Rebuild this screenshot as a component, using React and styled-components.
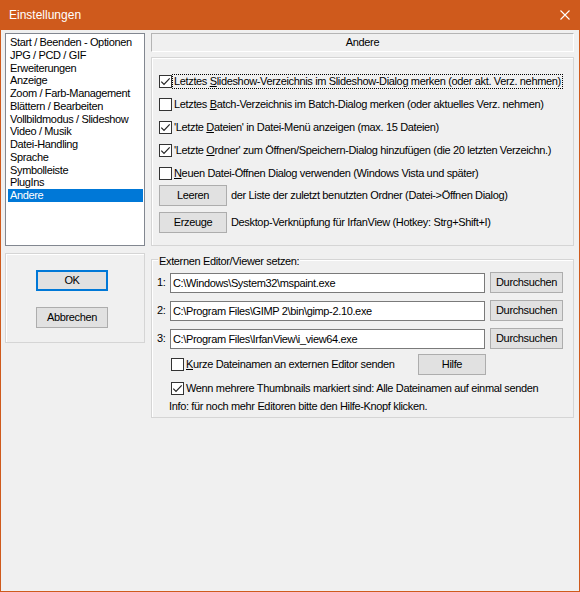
import React from 'react';
import styled, { createGlobalStyle } from 'styled-components';

const ACCENT = '#cf5a1c';
const LS = '-0.35px';

const GlobalStyle = createGlobalStyle`
  html, body { margin: 0; padding: 0; background: #f0f0f0; }
  body { font-family: "Liberation Sans", Arial, sans-serif; }
  #root { width: 580px; height: 592px; }
  * { box-sizing: border-box; }
`;

const Window = styled.div`
  width: 580px;
  height: 592px;
  display: flex;
  flex-direction: column;
  background: #f0f0f0;
  border: 1px solid ${ACCENT};
  border-top: none;
  font-family: "Liberation Sans", Arial, sans-serif;
  font-size: 11px;
  line-height: 13px;
  letter-spacing: ${LS};
  color: #000;
  overflow: hidden;
`;

const TitleBar = styled.div`
  flex: 0 0 30px;
  margin: 0 -1px;
  background: ${ACCENT};
  display: flex;
  align-items: center;
  justify-content: space-between;
  padding: 0 10px 0 9px;
`;

const Title = styled.span`
  color: #fff;
  font-size: 12px;
  letter-spacing: 0;
`;

const Body = styled.div`
  flex: 1;
  display: flex;
  gap: 6px;
  padding: 3px 4px 0 4px;
`;

const LeftCol = styled.div`
  flex: 0 0 140px;
  display: flex;
  flex-direction: column;
`;

const ListBox = styled.div`
  height: 213px;
  border: 1px solid #828790;
  background: #fff;
  padding: 2px 1px 0 2px;
`;

const ListItem = styled.div`
  height: 12.75px;
  line-height: 12.75px;
  padding-left: 2px;
  white-space: nowrap;
  background: ${p => (p.$selected ? '#0078d7' : 'transparent')};
  color: ${p => (p.$selected ? '#fff' : '#000')};
`;

const Etched = styled.div`
  border: 1px solid #d5d5d5;
  box-shadow: inset 1px 1px 0 #fff;
`;

const ButtonPanel = styled(Etched)`
  margin-top: 7px;
  height: 90px;
  display: flex;
  flex-direction: column;
  align-items: flex-start;
  gap: 16px;
  padding: 16px 0 0 30px;
`;

const PushButton = styled.button`
  width: ${p => p.$w || 72}px;
  height: 21px;
  flex-shrink: 0;
  background: #e1e1e1;
  border: ${p => (p.$default ? '2px solid #0078d7' : '1px solid #adadad')};
  padding: 0;
  font: inherit;
  letter-spacing: ${LS};
  color: #000;
  display: flex;
  align-items: center;
  justify-content: center;
`;

const RightCol = styled.div`
  flex: 0 0 423px;
  display: flex;
  flex-direction: column;
`;

const PageHeader = styled.div`
  height: 19px;
  border-top: 1px solid #b4b4b4;
  border-left: 1px solid #b4b4b4;
  border-bottom: 1px solid #fff;
  border-right: 1px solid #fff;
  text-align: center;
  line-height: 17px;
`;

const OptionsGroup = styled(Etched)`
  margin-top: 5px;
  height: 189px;
  display: flex;
  flex-direction: column;
  padding: 12px 0 0 7px;
`;

const CheckRow = styled.div`
  height: ${p => p.$h || 23}px;
  display: flex;
  align-items: center;
  gap: 1px;
  flex-shrink: 0;
`;

const Box = styled.span`
  width: 13px;
  height: 13px;
  flex-shrink: 0;
  border: 1px solid #333;
  background: #fff;
  display: flex;
  align-items: center;
  justify-content: center;
`;

const CheckLabel = styled.span`
  padding: 0 1px;
  white-space: nowrap;
  line-height: 13px;
  outline: ${p => (p.$focused ? '1px dotted #000' : 'none')};
`;

const ActionRow = styled.div`
  height: 21px;
  display: flex;
  align-items: center;
  gap: 4px;
  margin-bottom: 6px;
  white-space: nowrap;
`;

const EditorGroup = styled(Etched)`
  margin-top: 13px;
  display: flex;
  flex-direction: column;
  padding: 0 0 4px 5px;
`;

const Legend = styled.div`
  align-self: flex-start;
  margin: -5px 0 0 1px;
  padding: 0 1px;
  background: #f0f0f0;
  line-height: 13px;
`;

const EditorRows = styled.div`
  margin-top: 4px;
  display: flex;
  flex-direction: column;
  gap: 7px;
`;

const EditorRow = styled.div`
  height: 21px;
  display: flex;
  align-items: center;
`;

const RowLabel = styled.span`
  width: 13px;
  flex-shrink: 0;
`;

const PathField = styled.input`
  width: 315px;
  height: 20px;
  border: 1px solid #7a7a7a;
  background: #fff;
  padding: 0 2px;
  font: inherit;
  letter-spacing: ${LS};
  color: #000;
  margin-right: 5px;
  outline: none;
`;

const OptionRow = styled.div`
  margin-top: ${p => p.$mt || 0}px;
  height: ${p => p.$h}px;
  display: flex;
  align-items: center;
  padding-left: ${p => p.$pl || 0}px;
`;

const OptionSlot = styled.div`
  width: ${p => p.$w}px;
  display: flex;
`;

const CloseIcon = () => (
  <svg width="10" height="10" viewBox="0 0 10 10">
    <path d="M0.5 0.5 L9.5 9.5 M9.5 0.5 L0.5 9.5" stroke="#fff" strokeWidth="1.1" fill="none" />
  </svg>
);

const Check = ({ checked, focused, children, h }) => (
  <CheckRow $h={h}>
    <Box>
      {checked && (
        <svg width="11" height="11" viewBox="0 0 11 11">
          <polyline points="1.3,5.6 4,8.3 9.7,2.4" fill="none" stroke="#222" strokeWidth="1.2" />
        </svg>
      )}
    </Box>
    <CheckLabel $focused={focused}>{children}</CheckLabel>
  </CheckRow>
);

const pages = [
  'Start / Beenden - Optionen',
  'JPG / PCD / GIF',
  'Erweiterungen',
  'Anzeige',
  'Zoom / Farb-Management',
  'Blättern / Bearbeiten',
  'Vollbildmodus / Slideshow',
  'Video / Musik',
  'Datei-Handling',
  'Sprache',
  'Symbolleiste',
  'PlugIns',
  'Andere',
];

const editors = [
  'C:\\Windows\\System32\\mspaint.exe',
  'C:\\Program Files\\GIMP 2\\bin\\gimp-2.10.exe',
  'C:\\Program Files\\IrfanView\\i_view64.exe',
];

export default function App() {
  return (
    <>
      <GlobalStyle />
      <Window>
        <TitleBar>
          <Title>Einstellungen</Title>
          <CloseIcon />
        </TitleBar>
        <Body>
          <LeftCol>
            <ListBox>
              {pages.map(p => (
                <ListItem key={p} $selected={p === 'Andere'}>{p}</ListItem>
              ))}
            </ListBox>
            <ButtonPanel>
              <PushButton $default>OK</PushButton>
              <PushButton>Abbrechen</PushButton>
            </ButtonPanel>
          </LeftCol>
          <RightCol>
            <PageHeader>Andere</PageHeader>
            <OptionsGroup>
              <Check checked focused>
                Letztes <u>S</u>lideshow-Verzeichnis im Slideshow-Dialog merken (oder akt. Verz. nehmen)
              </Check>
              <Check>
                Letztes <u>B</u>atch-Verzeichnis im Batch-Dialog merken (oder aktuelles Verz. nehmen)
              </Check>
              <Check checked>
                'Letzte <u>D</u>ateien' in Datei-Menü anzeigen (max. 15 Dateien)
              </Check>
              <Check checked>
                'Letzte <u>O</u>rdner' zum Öffnen/Speichern-Dialog hinzufügen (die 20 letzten Verzeichn.)
              </Check>
              <Check>
                <u>N</u>euen Datei-Öffnen Dialog verwenden (Windows Vista und später)
              </Check>
              <ActionRow>
                <PushButton $w={68}>Leeren</PushButton>
                <span>der Liste der zuletzt benutzten Ordner (Datei-&gt;Öffnen Dialog)</span>
              </ActionRow>
              <ActionRow>
                <PushButton $w={68}>Erzeuge</PushButton>
                <span>Desktop-Verknüpfung für IrfanView (Hotkey: Strg+Shift+I)</span>
              </ActionRow>
            </OptionsGroup>
            <EditorGroup>
              <Legend>Externen Editor/Viewer setzen:</Legend>
              <EditorRows>
                {editors.map((e, i) => (
                  <EditorRow key={e}>
                    <RowLabel>{i + 1}:</RowLabel>
                    <PathField readOnly value={e} />
                    <PushButton $w={73}>Durchsuchen</PushButton>
                  </EditorRow>
                ))}
              </EditorRows>
              <OptionRow $mt={5} $h={21} $pl={14}>
                <OptionSlot $w={247}>
                  <Check h={21}>
                    <u>K</u>urze Dateinamen an externen Editor senden
                  </Check>
                </OptionSlot>
                <PushButton $w={68}>Hilfe</PushButton>
              </OptionRow>
              <OptionRow $mt={5} $h={17} $pl={14}>
                <Check checked h={17}>
                  Wenn mehrere Thumbnails markiert sind: Alle Dateinamen auf einmal senden
                </Check>
              </OptionRow>
              <OptionRow $mt={3} $h={13} $pl={12}>
                Info: für noch mehr Editoren bitte den Hilfe-Knopf klicken.
              </OptionRow>
            </EditorGroup>
          </RightCol>
        </Body>
      </Window>
    </>
  );
}
